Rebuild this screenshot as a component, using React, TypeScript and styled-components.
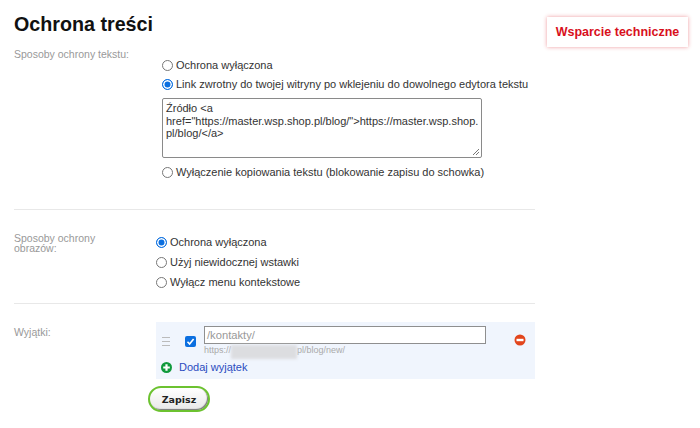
import React from 'react';
import styled, { createGlobalStyle } from 'styled-components';

const GlobalStyle = createGlobalStyle`
  html, body {
    margin: 0;
    padding: 0;
    background: #fff;
  }
  body {
    font-family: 'Liberation Sans', Arial, sans-serif;
    font-size: 11px;
    color: #333;
  }
`;

const Page = styled.div`
  display: flex;
  align-items: flex-start;
  width: 700px;
  height: 428px;
  overflow: hidden;
  padding-left: 14px;
  box-sizing: border-box;
`;

const Main = styled.main`
  width: 521px;
  flex-shrink: 0;
`;

const Title = styled.h1`
  margin: 13px 0 1px;
  font-size: 19.7px;
  line-height: 23px;
  font-weight: bold;
  color: #111;
`;

const Support = styled.a`
  margin: 17px 0 0 12px;
  width: 141px;
  height: 30px;
  box-sizing: border-box;
  display: flex;
  align-items: center;
  justify-content: center;
  background: #fff;
  box-shadow: 0 0 4px rgba(220, 30, 40, 0.45);
  color: #d8101c;
  font-size: 12.5px;
  font-weight: bold;
`;

const Section = styled.section<{ $height: number; $line?: boolean }>`
  display: flex;
  height: ${({ $height }) => $height}px;
  box-sizing: border-box;
  border-bottom: ${({ $line }) => ($line ? '1px solid #e8e8e8' : 'none')};
`;

const Label = styled.div<{ $width: number; $top: number }>`
  width: ${({ $width }) => $width}px;
  flex-shrink: 0;
  padding-top: ${({ $top }) => $top}px;
  color: #999;
  font-size: 10.5px;
  line-height: 10px;
`;

const Options = styled.div<{ $top: number; $gap: number }>`
  display: flex;
  flex-direction: column;
  gap: ${({ $gap }) => $gap}px;
  padding-top: ${({ $top }) => $top}px;
`;

const Option = styled.label`
  display: flex;
  align-items: center;
  gap: 3px;
  height: 14px;
  white-space: nowrap;
  color: #333;
`;

const Radio = styled.span<{ $on?: boolean }>`
  width: 11px;
  height: 11px;
  flex-shrink: 0;
  box-sizing: border-box;
  border-radius: 50%;
  border: 1px solid ${({ $on }) => ($on ? '#0b6fe0' : '#777')};
  background: ${({ $on }) => ($on ? '#0b6fe0' : '#fff')};
  box-shadow: ${({ $on }) => ($on ? 'inset 0 0 0 1.5px #fff' : 'none')};
`;

const LinkBox = styled.div`
  position: relative;
  width: 320px;
  height: 60px;
  box-sizing: border-box;
  margin: 2px 0 2px;
  padding: 3px 0 0 3px;
  border: 1px solid #8a8a8a;
  border-radius: 2px;
  font-size: 11px;
  line-height: 12.5px;
  color: #333;
  overflow-wrap: break-word;
`;

const Grip = styled.svg`
  position: absolute;
  right: 1px;
  bottom: 1px;
  width: 9px;
  height: 9px;
`;

const Panel = styled.div`
  width: 379px;
  height: 57px;
  margin-top: 18px;
  background: #f0f5fd;
  box-sizing: border-box;
  padding: 4px 0 0 5px;
`;

const ExceptionRow = styled.div`
  display: flex;
  align-items: flex-start;
`;

const Handle = styled.div`
  width: 8px;
  height: 7px;
  margin: 11px 15px 0 1px;
  flex-shrink: 0;
  border-top: 1px solid #bbb;
  border-bottom: 1px solid #bbb;
  position: relative;
  &::after {
    content: '';
    position: absolute;
    left: 0;
    right: 0;
    top: 3px;
    height: 1px;
    background: #bbb;
  }
`;

const Check = styled.span`
  width: 11px;
  height: 11px;
  margin: 10px 8px 0 0;
  flex-shrink: 0;
  border-radius: 2px;
  background: #0b6fe0;
  display: flex;
  align-items: center;
  justify-content: center;
`;

const UrlColumn = styled.div`
  width: 282px;
`;

const UrlInput = styled.div`
  height: 18px;
  box-sizing: border-box;
  padding: 0 2px;
  border: 1px solid #8f8f8f;
  background: #fff;
  color: #999;
  font-size: 11.2px;
  line-height: 16px;
`;

const UrlHint = styled.div`
  position: relative;
  margin-top: 1px;
  font-size: 9px;
  line-height: 11px;
  color: #aaa;
`;

const Redacted = styled.span`
  position: absolute;
  left: 27px;
  top: 0;
  width: 66px;
  height: 14px;
  background: #dcdde0;
  filter: blur(1.5px);
`;

const HintTail = styled.span`
  margin-left: 66px;
`;

const RemoveIcon = styled.svg`
  width: 12px;
  height: 12px;
  margin: 8px 0 0 28px;
  flex-shrink: 0;
`;

const AddRow = styled.div`
  display: flex;
  align-items: center;
  gap: 7px;
  margin-top: 5px;
  color: #2a4cc0;
  font-size: 11px;
`;

const Actions = styled.div`
  padding: 7px 0 0 134px;
`;

const SaveButton = styled.button`
  width: 62px;
  height: 26px;
  padding: 0;
  border: 2px solid #6cc230;
  border-radius: 13px;
  background: linear-gradient(#fff, #e8e8e8);
  box-shadow: inset -1px -1px 1px #777;
  font-family: 'DejaVu Sans', sans-serif;
  font-size: 9.5px;
  font-weight: bold;
  color: #222;
`;

export default function App() {
  return (
    <>
      <GlobalStyle />
      <Page>
        <Main>
          <Title>Ochrona treści</Title>
          <Section $height={173} $line>
            <Label $width={148} $top={12}>Sposoby ochrony tekstu:</Label>
            <Options $top={21} $gap={5}>
              <Option><Radio />Ochrona wyłączona</Option>
              <Option><Radio $on />Link zwrotny do twojej witryny po wklejeniu do dowolnego edytora tekstu</Option>
              <LinkBox>
                Źródło &lt;a href="https://master.wsp.shop.pl/blog/"&gt;https://master.wsp.shop.pl/blog/&lt;/a&gt;
                <Grip viewBox="0 0 9 9">
                  <path d="M8 2L2 8M8 5L5 8" stroke="#777" strokeWidth="1" fill="none" />
                </Grip>
              </LinkBox>
              <Option><Radio />Wyłączenie kopiowania tekstu (blokowanie zapisu do schowka)</Option>
            </Options>
          </Section>
          <Section $height={94} $line>
            <Label $width={142} $top={23}>Sposoby ochrony<br />obrazów:</Label>
            <Options $top={25} $gap={6}>
              <Option><Radio $on />Ochrona wyłączona</Option>
              <Option><Radio />Użyj niewidocznej wstawki</Option>
              <Option><Radio />Wyłącz menu kontekstowe</Option>
            </Options>
          </Section>
          <Section $height={75}>
            <Label $width={142} $top={23}>Wyjątki:</Label>
            <Panel>
              <ExceptionRow>
                <Handle />
                <Check>
                  <svg width="9" height="9" viewBox="0 0 9 9">
                    <path d="M1.5 4.8L3.6 7L7.6 2" stroke="#fff" strokeWidth="1.6" fill="none" />
                  </svg>
                </Check>
                <UrlColumn>
                  <UrlInput>/kontakty/</UrlInput>
                  <UrlHint>
                    https://<Redacted />
                    <HintTail>pl/blog/new/</HintTail>
                  </UrlHint>
                </UrlColumn>
                <RemoveIcon viewBox="0 0 12 12">
                  <circle cx="6" cy="6" r="5.5" fill="#e2451c" />
                  <rect x="2.5" y="4.8" width="7" height="2.4" fill="#fff" />
                </RemoveIcon>
              </ExceptionRow>
              <AddRow>
                <svg width="11" height="11" viewBox="0 0 11 11">
                  <circle cx="5.5" cy="5.5" r="5.5" fill="#109a3c" />
                  <path d="M5.5 2.2V8.8M2.2 5.5H8.8" stroke="#fff" strokeWidth="2.2" />
                </svg>
                Dodaj wyjątek
              </AddRow>
            </Panel>
          </Section>
          <Actions>
            <SaveButton>Zapisz</SaveButton>
          </Actions>
        </Main>
        <Support>Wsparcie techniczne</Support>
      </Page>
    </>
  );
}
